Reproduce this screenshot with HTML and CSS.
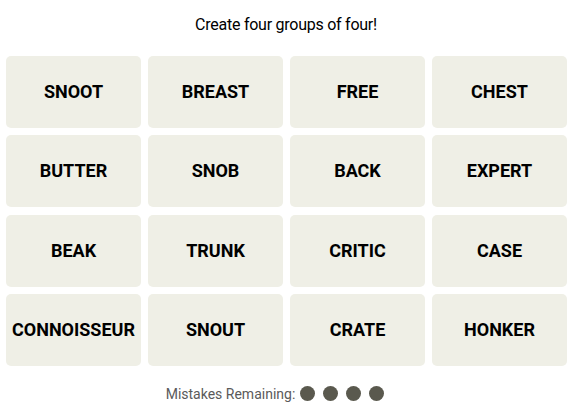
FILE: index.html
```html
<!DOCTYPE html>
<html lang="en">
<head>
  <meta charset="UTF-8">
  <meta name="viewport" content="width=device-width, initial-scale=1.0">
  <title>Connections</title>
  <link rel="stylesheet" href="styles.css">
</head>
<body>
  <p class="intro">Create four groups of four!</p>

  <!-- Griglia delle parole -->
  <div class="board">
    <button class="tile">SNOOT</button>
    <button class="tile">BREAST</button>
    <button class="tile">FREE</button>
    <button class="tile">CHEST</button>
    <button class="tile">BUTTER</button>
    <button class="tile">SNOB</button>
    <button class="tile">BACK</button>
    <button class="tile">EXPERT</button>
    <button class="tile">BEAK</button>
    <button class="tile">TRUNK</button>
    <button class="tile">CRITIC</button>
    <button class="tile">CASE</button>
    <button class="tile">CONNOISSEUR</button>
    <button class="tile">SNOUT</button>
    <button class="tile">CRATE</button>
    <button class="tile">HONKER</button>
  </div>

  <div class="mistakes">
    <span class="mistakes-label">Mistakes Remaining:</span>
    <span class="dots">
      <span class="dot"></span>
      <span class="dot"></span>
      <span class="dot"></span>
      <span class="dot"></span>
    </span>
  </div>
</body>
</html>
```

FILE: styles.css
```css
body {
  margin: 0;
  background-color: #ffffff;
  font-family: Roboto, "Liberation Sans", sans-serif;
  color: #000;
}
.intro {
  margin: 0;
  padding-top: 15px;
  height: 41px;
  box-sizing: border-box;
  text-align: center;
  font-size: 16px;
  line-height: 20px;
  letter-spacing: -0.25px;
}
/* Griglia */
.board {
  display: grid;
  grid-template-columns: repeat(4, 135px);
  grid-template-rows: repeat(4, 72px);
  column-gap: 7px;
  row-gap: 7.33px;
  padding-left: 6px;
  margin-top: 15px;
}
.tile {
  border: none;
  border-radius: 5px;
  background-color: #efefe6;
  font-family: Roboto, "Liberation Sans", sans-serif;
  font-weight: 700;
  font-size: 18px;
  color: #000;
  padding: 0 0 1px;
}
/* Errori rimasti */
.mistakes {
  display: flex;
  align-items: center;
  justify-content: center;
  gap: 5px;
  margin-top: 20px;
  padding-right: 22px;
  height: 16px;
}
.mistakes-label {
  font-size: 14px;
  color: #5a5a5a;
}
.dots {
  display: flex;
  gap: 8px;
}
.dot {
  width: 15px;
  height: 15px;
  border-radius: 50%;
  background-color: #5a594e;
}
```
